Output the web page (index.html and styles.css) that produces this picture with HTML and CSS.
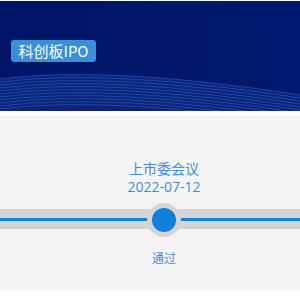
FILE: index.html
```html
<html>
<head>
  <meta charset="UTF-8">
  <meta name="viewport" content="width=device-width, initial-scale=1.0">
  <title>科创板IPO</title>
  <link rel="stylesheet" href="styles.css">
</head>
<body>

  <div class="banner">
    <svg class="waves" width="300" height="40" viewBox="0 0 300 40" preserveAspectRatio="none">
      <path d="M0 8 Q110 -6 300 24 L300 40 L0 40 Z" fill="#0a2478"/>
      <g fill="none" stroke="#2a56c0" stroke-width="1" opacity="0.7">
        <path d="M0 8 Q110 -6 300 24"/>
        <path d="M0 11 Q110 -3 300 27"/>
        <path d="M0 14 Q110 0 300 30"/>
        <path d="M0 17 Q110 3 300 33"/>
        <path d="M0 20 Q110 6 300 36"/>
        <path d="M0 23 Q110 9 300 39"/>
        <path d="M0 26 Q110 12 300 42"/>
        <path d="M0 29 Q110 15 300 45"/>
        <path d="M0 32 Q110 18 300 48"/>
        <path d="M0 35 Q110 21 300 51"/>
        <path d="M0 38 Q110 24 300 54"/>
      </g>
    </svg>
    <span class="tag">科创板IPO</span>
  </div>

  <div class="panel">
    <div class="step">
      <div class="step-title">上市委会议</div>
      <div class="step-date">2022-07-12</div>
      <div class="track">
        <span class="dot"></span>
      </div>
      <div class="step-result">通过</div>
    </div>
  </div>

</body>
</html>
```

FILE: styles.css
```css
body {
  margin: 0;
  background: #fff;
  font-family: "Noto Sans CJK SC", "Noto Sans", sans-serif;
}

.banner {
  position: relative;
  margin-top: 1px;
  height: 110px;
  background: linear-gradient(to right, #001466, #00196e);
  overflow: hidden;
}

.waves {
  position: absolute;
  left: 0;
  bottom: 0;
  display: block;
}

.tag {
  position: absolute;
  left: 11px;
  top: 39px;
  width: 85px;
  height: 22px;
  line-height: 22px;
  text-align: center;
  background: #3a8fd8;
  color: #fff;
  font-size: 15px;
  border-radius: 3px;
}

.panel {
  margin-top: 4px;
  height: 175px;
  background: #f4f4f4;
}

.step {
  display: flex;
  flex-direction: column;
  align-items: center;
  padding-top: 44px;
  padding-left: 28px;
  color: #3c8ee0;
}

.step-title {
  font-size: 14px;
  line-height: 19px;
}

.step-date {
  font-family: "Open Sans", "Noto Sans", sans-serif;
  font-size: 14px;
  line-height: 17px;
}

.track {
  position: relative;
  align-self: stretch;
  margin-left: -28px;
  margin-top: 14px;
  height: 20px;
  background: #d4d4d4;
}

.track::before {
  content: "";
  position: absolute;
  left: 0;
  right: 0;
  top: 9px;
  height: 3px;
  background: #1180dc;
}

.dot {
  position: absolute;
  left: 147px;
  top: -6px;
  width: 24px;
  height: 24px;
  border: 5px solid #d4d4d4;
  border-radius: 50%;
  background: #1180dc;
}

.step-result {
  margin-top: 21px;
  font-size: 12px;
  line-height: 16px;
}
```
